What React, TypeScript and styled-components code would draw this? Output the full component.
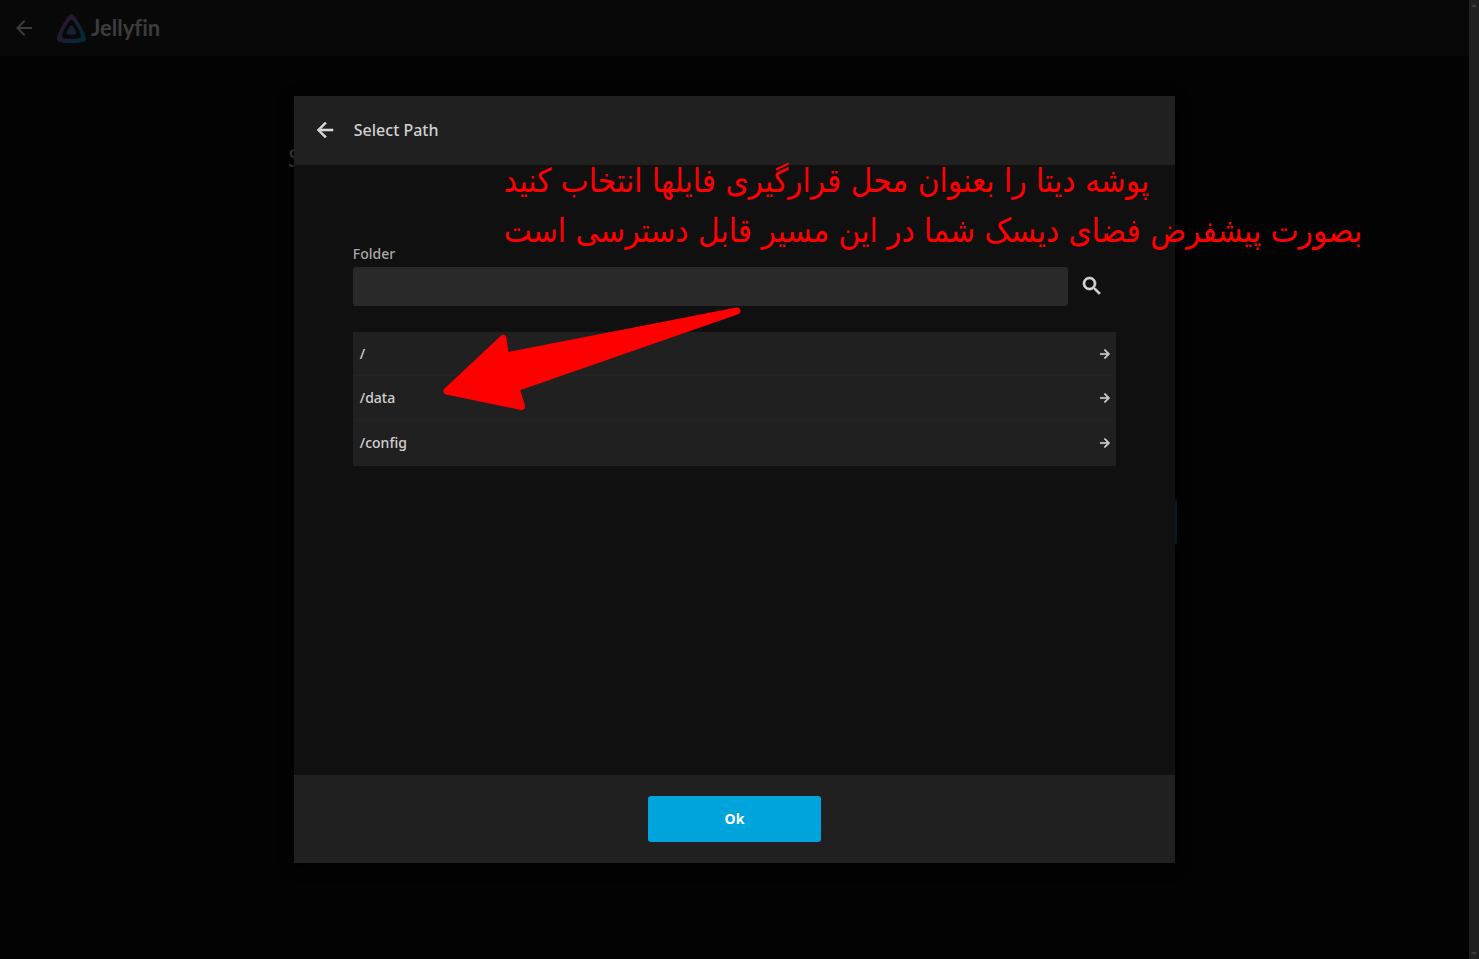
import React from "react";
import styled, { createGlobalStyle } from "styled-components";

const GlobalStyle = createGlobalStyle`
  * { box-sizing: border-box; }
  body {
    margin: 0;
    background: #030303;
    color: #d1d1d1;
    font-family: "Noto Sans", sans-serif;
    overflow: hidden;
  }
`;

const Shell = styled.div`
  display: grid;
  grid-template-columns: 1fr 10px;
  height: 100vh;
`;

const Viewport = styled.div`
  position: relative;
  min-width: 0;
`;

const ScrollTrack = styled.div`
  display: flex;
  flex-direction: column;
  align-items: center;
  justify-content: space-between;
  padding: 4px 0;
  background: #202020;
`;

const TopBar = styled.header`
  display: flex;
  align-items: center;
  height: 56px;
  padding-left: 12px;
  background: #080808;
`;

const IconButton = styled.button<{ $size: number; $color?: string }>`
  display: flex;
  align-items: center;
  justify-content: center;
  flex: none;
  padding: 0;
  border: 0;
  background: none;
  color: ${(p) => p.$color ?? "#d6d6d6"};
  svg {
    width: ${(p) => p.$size}px;
    height: ${(p) => p.$size}px;
    fill: currentColor;
  }
`;

const Brand = styled.a`
  display: flex;
  align-items: center;
  gap: 5px;
  margin-left: 21px;
  color: #3c3c3c;
  font: 700 22px/28px Lato, sans-serif;
  font-variant-ligatures: none;
  text-decoration: none;
`;

const Page = styled.main`
  display: flex;
  flex-direction: column;
  gap: 324px;
  padding: 83px 292px 0 288px;
`;

const PageTitle = styled.h1`
  margin: 0;
  color: #484848;
  font-size: 26px;
  font-weight: 400;
  line-height: 36px;
`;

const PageAction = styled.button`
  height: 46px;
  margin-left: 20px;
  border: 0;
  border-radius: 3px;
  background: #003044;
`;

const Scrim = styled.div`
  position: absolute;
  inset: 0;
  display: flex;
  align-items: center;
  justify-content: center;
`;

const Dialog = styled.section`
  position: relative;
  display: flex;
  flex-direction: column;
  width: 60%;
  height: 80%;
  background: #101010;
  box-shadow: 0 4px 12px #000000;
`;

const DialogHeader = styled.header`
  display: flex;
  align-items: center;
  gap: 17px;
  height: 69px;
  padding-left: 19px;
  background: #202020;
`;

const DialogTitle = styled.h2`
  margin: 0;
  font-size: 16px;
  font-weight: 500;
  line-height: 24px;
`;

const DialogBody = styled.div`
  flex: 1;
  padding: 77px 59px 0;
`;

const DialogFooter = styled.footer`
  display: flex;
  align-items: center;
  justify-content: center;
  height: 88px;
  background: #202020;
`;

const FieldLabel = styled.label`
  display: block;
  margin-bottom: 1px;
  color: #a8a8a8;
  font-size: 14px;
  font-weight: 500;
  line-height: 24px;
`;

const FieldRow = styled.div`
  display: flex;
  align-items: center;
  gap: 12px;
  padding-right: 12px;
`;

const PathInput = styled.input`
  flex: 1;
  min-width: 0;
  height: 39px;
  padding: 0 8px;
  border: 0;
  border-radius: 3px;
  background: #292929;
  color: #d1d1d1;
  font: inherit;
`;

const PathList = styled.ul`
  margin: 26px 0 0;
  padding: 0;
  list-style: none;
  background: #202020;
`;

const PathRow = styled.button`
  display: flex;
  align-items: center;
  justify-content: space-between;
  width: 100%;
  height: 44px;
  padding: 0 4px 0 7px;
  border: 0;
  background: none;
  box-shadow: inset 0 -1px #232323;
  color: #d1d1d1;
  font: 500 14px/24px "Noto Sans", sans-serif;
  li:last-child > & { height: 46px; box-shadow: none; }
  svg { width: 14px; height: 14px; fill: currentColor; }
`;

const SubmitButton = styled.button`
  width: 173px;
  height: 46px;
  border: 0;
  border-radius: 3px;
  background: #00a4dc;
  color: #ffffff;
  font: 700 14px/20px "Noto Sans", sans-serif;
`;

const Note = styled.p`
  position: absolute;
  top: 60px;
  left: 210px;
  margin: 0;
  color: #ff0000;
  font: 400 33px/50px "DejaVu Sans Condensed", "DejaVu Sans", sans-serif;
  white-space: nowrap;
  pointer-events: none;
`;

const NoteLine = styled.span`
  display: block;
  unicode-bidi: plaintext;
  text-align: left;
`;

const Pointer = styled.svg`
  position: absolute;
  top: 204px;
  left: 146px;
  pointer-events: none;
`;

const BackIcon = () => (
  <svg viewBox="0 0 24 24" aria-hidden="true">
    <path d="M20 11H7.83l5.59-5.59L12 4l-8 8 8 8 1.41-1.41L7.83 13H20v-2z" />
  </svg>
);

const BoldBackIcon = () => (
  <svg viewBox="0 0 24 24" aria-hidden="true">
    <path d="M20 11H7.83l5.59-5.59L12 4l-8 8 8 8 1.41-1.41L7.83 13H20v-2z" stroke="currentColor" strokeWidth="0.6" />
  </svg>
);

const ForwardIcon = () => (
  <svg viewBox="0 0 24 24" aria-hidden="true">
    <path d="M12 4l-1.41 1.41L16.17 11H4v2h12.17l-5.58 5.59L12 20l8-8z" stroke="currentColor" strokeWidth="1.2" />
  </svg>
);

const SearchIcon = () => (
  <svg viewBox="0 0 24 24" aria-hidden="true">
    <path
      d="M15.5 14h-.79l-.28-.27C15.41 12.59 16 11.11 16 9.5 16 5.91 13.09 3 9.5 3S3 5.91 3 9.5 5.91 16 9.5 16c1.61 0 3.09-.59 4.23-1.57l.27.28v.79l5 4.99L20.49 19l-4.99-5zm-6 0C7.01 14 5 11.99 5 9.5S7.01 5 9.5 5 14 7.01 14 9.5 11.99 14 9.5 14z"
      stroke="currentColor"
      strokeWidth="0.6"
    />
  </svg>
);

const Logo = () => (
  <svg width="29" height="29" viewBox="0 0 24 24" aria-hidden="true">
    <defs>
      <linearGradient id="brand" x1="0.1" y1="0.45" x2="0.9" y2="0.9">
        <stop offset="0" stopColor="#2a1732" />
        <stop offset="1" stopColor="#002a38" />
      </linearGradient>
    </defs>
    <path
      fill="url(#brand)"
      d="M12 .002C8.826.002-1.398 18.537.16 21.666c1.56 3.129 22.14 3.094 23.682 0C25.384 18.573 15.177 0 12 0zm7.76 18.949c-1.008 2.028-14.493 2.05-15.514 0C3.224 16.9 9.92 4.755 12.003 4.755c2.081 0 8.77 12.166 7.759 14.196zM12 9.198c-1.054 0-4.446 6.15-3.93 7.189.518 1.04 7.348 1.027 7.86 0 .511-1.027-2.874-7.19-3.93-7.19z"
    />
  </svg>
);

const paths = ["/", "/data", "/config"];

export default function App() {
  return (
    <>
      <GlobalStyle />
      <Shell>
        <Viewport>
          <TopBar>
            <IconButton $size={24} $color="#3c3c3c" aria-label="Back">
              <BackIcon />
            </IconButton>
            <Brand href="#">
              <Logo />
              Jellyfin
            </Brand>
          </TopBar>
          <Page>
            <PageTitle>S</PageTitle>
            <PageAction aria-label="Next" />
          </Page>
          <Scrim>
            <Dialog role="dialog" aria-labelledby="dialog-title">
              <DialogHeader>
                <IconButton $size={24} aria-label="Close">
                  <BoldBackIcon />
                </IconButton>
                <DialogTitle id="dialog-title">Select Path</DialogTitle>
              </DialogHeader>
              <DialogBody>
                <FieldLabel htmlFor="folder">Folder</FieldLabel>
                <FieldRow>
                  <PathInput id="folder" type="text" />
                  <IconButton $size={24} aria-label="Refresh">
                    <SearchIcon />
                  </IconButton>
                </FieldRow>
                <PathList>
                  {paths.map((path) => (
                    <li key={path}>
                      <PathRow>
                        {path}
                        <ForwardIcon />
                      </PathRow>
                    </li>
                  ))}
                </PathList>
              </DialogBody>
              <DialogFooter>
                <SubmitButton>Ok</SubmitButton>
              </DialogFooter>
              <Note lang="fa">
                <NoteLine>پوشه دیتا را بعنوان محل قرارگیری فایلها انتخاب کنید</NoteLine>
                <NoteLine>بصورت پیشفرض فضای دیسک شما در این مسیر قابل دسترسی است</NoteLine>
              </Note>
              <Pointer width="304" height="116" viewBox="440 300 304 116" aria-hidden="true">
                <path
                  d="M447 391L503 338.500L505.500 356L737 311L516 388L521.500 406.500Z"
                  fill="#ff0000"
                  stroke="#ff0000"
                  strokeWidth="7"
                  strokeLinejoin="round"
                />
              </Pointer>
            </Dialog>
          </Scrim>
        </Viewport>
        <ScrollTrack aria-hidden="true">
          <svg width="6" height="3" viewBox="0 0 6 3">
            <path d="M3 0L6 3H0Z" fill="#3c3c3c" />
          </svg>
          <svg width="6" height="3" viewBox="0 0 6 3">
            <path d="M3 3L6 0H0Z" fill="#3c3c3c" />
          </svg>
        </ScrollTrack>
      </Shell>
    </>
  );
}
